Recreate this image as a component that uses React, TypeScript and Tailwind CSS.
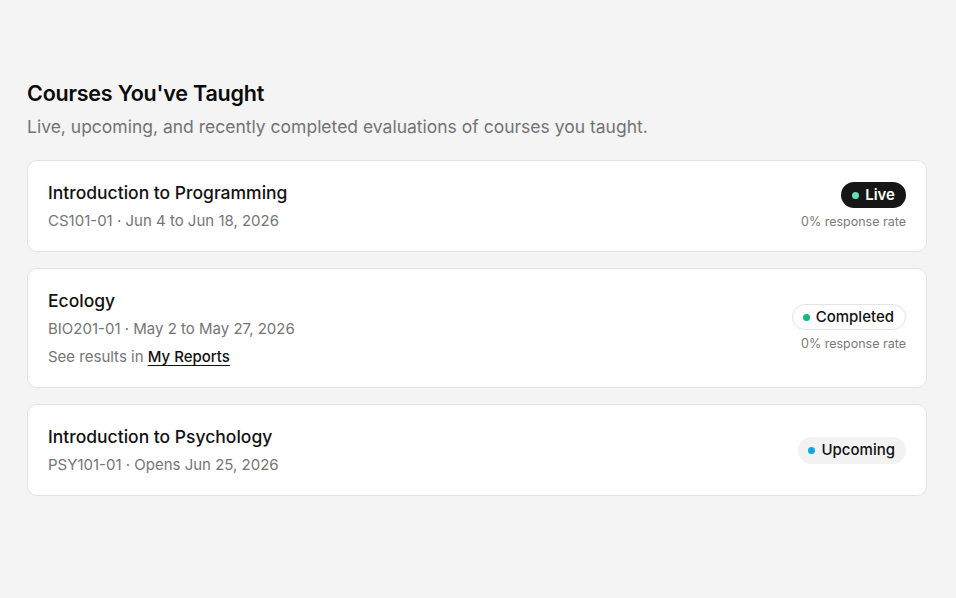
import React from "react";

type Status = "live" | "completed" | "upcoming";

interface Course {
  title: string;
  meta: string;
  status: Status;
  rate?: string;
  reportLink?: boolean;
}

const courses: Course[] = [
  { title: "Introduction to Programming", meta: "CS101-01 · Jun 4 to Jun 18, 2026", status: "live", rate: "0% response rate" },
  { title: "Ecology", meta: "BIO201-01 · May 2 to May 27, 2026", status: "completed", rate: "0% response rate", reportLink: true },
  { title: "Introduction to Psychology", meta: "PSY101-01 · Opens Jun 25, 2026", status: "upcoming" },
];

function StatusBadge({ status }: { status: Status }) {
  if (status === "live") {
    return (
      <span className="inline-flex items-center gap-1.5 rounded-full bg-[#161616] pl-[11px] pr-[11px] h-[26px] text-[15px] font-semibold text-white">
        <span className="h-[7px] w-[7px] rounded-full bg-[#5fe3b2]" />
        Live
      </span>
    );
  }
  if (status === "completed") {
    return (
      <span className="inline-flex items-center gap-1.5 rounded-full border border-[#e4e4e4] bg-white pl-[10px] pr-[11px] h-[26px] text-[15px] font-medium text-[#111]">
        <span className="h-[7px] w-[7px] rounded-full bg-[#10b981]" />
        Completed
      </span>
    );
  }
  return (
    <span className="inline-flex items-center gap-1.5 rounded-full bg-[#f2f2f2] pl-[10px] pr-[11px] h-[27px] text-[15px] font-medium text-[#111]">
      <span className="h-[7px] w-[7px] rounded-full bg-[#0ea5e9]" />
      Upcoming
    </span>
  );
}

export default function App() {
  return (
    <div className="min-h-screen bg-[#f4f4f4] font-['Inter',sans-serif]">
      <div className="pl-[27px] pr-[29px] pt-[79px]">
        <h1 className="text-[21.5px] font-semibold leading-7 tracking-[-0.01em] text-[#0a0a0a]">
          Courses You've Taught
        </h1>
        <p className="mt-[8px] text-[17.5px] leading-6 text-[#737373]">
          Live, upcoming, and recently completed evaluations of courses you taught.
        </p>

        <div className="mt-[21px] flex flex-col gap-4">
          {courses.map((c) => (
            <div
              key={c.title}
              className="flex items-center justify-between rounded-[10px] border border-[#e3e3e3] bg-white px-5 py-5"
            >
              <div className="flex flex-col">
                <div className="text-[17.5px] font-medium leading-6 text-[#111]">{c.title}</div>
                <div className="mt-[6px] text-[15px] leading-5 text-[#757575]">{c.meta}</div>
                {c.reportLink && (
                  <div className="mt-[8px] text-[15px] leading-5 text-[#757575]">
                    See results in{" "}
                    <a href="#" className="font-medium text-[#111] underline underline-offset-[3px]">
                      My Reports
                    </a>
                  </div>
                )}
              </div>
              <div className="flex flex-col items-end gap-[6px]">
                <StatusBadge status={c.status} />
                {c.rate && <div className="text-[12.5px] leading-4 text-[#7a7a7a]">{c.rate}</div>}
              </div>
            </div>
          ))}
        </div>
      </div>
    </div>
  );
}
